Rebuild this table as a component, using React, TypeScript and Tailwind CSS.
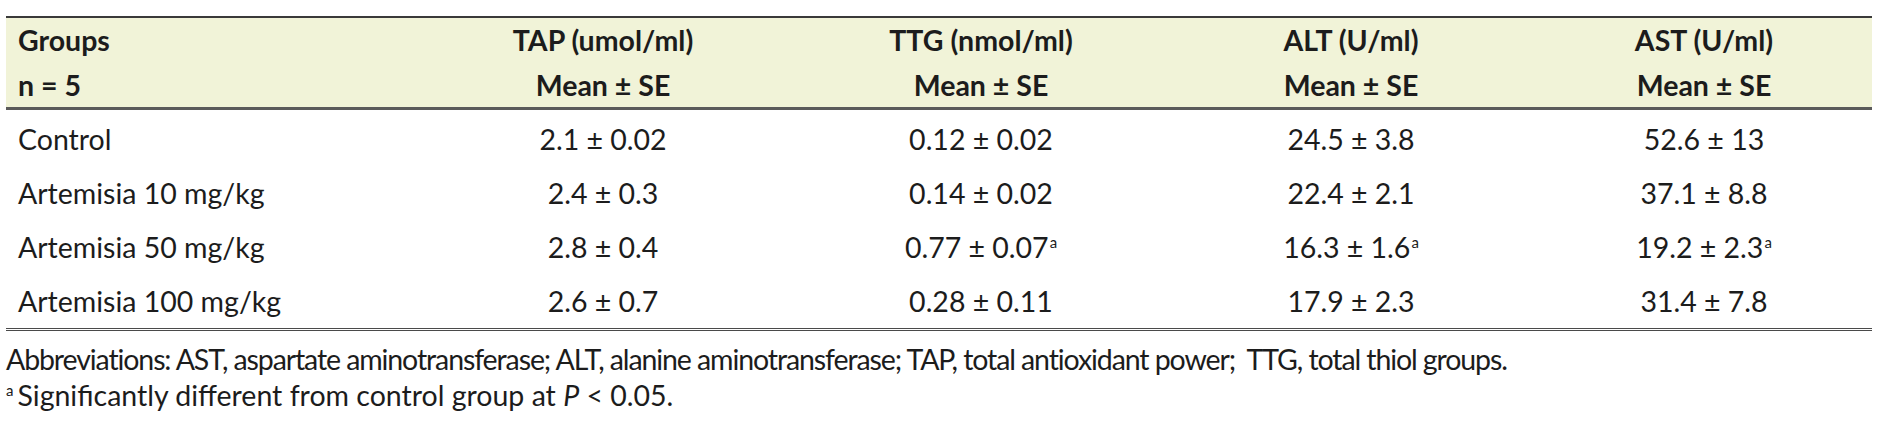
const rows = [
  { group: 'Control', tap: '2.1 ± 0.02', ttg: '0.12 ± 0.02', alt: '24.5 ± 3.8', ast: '52.6 ± 13' },
  { group: 'Artemisia 10 mg/kg', tap: '2.4 ± 0.3', ttg: '0.14 ± 0.02', alt: '22.4 ± 2.1', ast: '37.1 ± 8.8' },
  { group: 'Artemisia 50 mg/kg', tap: '2.8 ± 0.4', ttg: '0.77 ± 0.07', alt: '16.3 ± 1.6', ast: '19.2 ± 2.3', sig: true },
  { group: 'Artemisia 100 mg/kg', tap: '2.6 ± 0.7', ttg: '0.28 ± 0.11', alt: '17.9 ± 2.3', ast: '31.4 ± 7.8' },
];

const cols = 'grid grid-cols-[404px_386px_370px_370px_336px]';

function Sup() {
  return <sup className="text-[15px] relative -top-[10px] ml-[1px]">a</sup>;
}

export default function App() {
  return (
    <div className="w-[1890px] h-[426px] bg-white text-[#1c1c1c] font-['Lato','Liberation_Sans',sans-serif] text-[28.5px]">
      <div className="pt-[16px] pl-[6px] w-[1872px]">
        {/* header */}
        <div className="bg-[#f1f3d8] border-t-2 border-[#3a3a3a] border-b-[3px] border-b-[#5a5a5a] font-bold">
          <div className={`${cols} h-[45px] items-center`}>
            <div className="pl-[12px]">Groups</div>
            <div className="text-center">TAP (umol/ml)</div>
            <div className="text-center">TTG (nmol/ml)</div>
            <div className="text-center">ALT (U/ml)</div>
            <div className="text-center">AST (U/ml)</div>
          </div>
          <div className={`${cols} h-[44px] items-center`}>
            <div className="pl-[12px]">n = 5</div>
            <div className="text-center">Mean ± SE</div>
            <div className="text-center">Mean ± SE</div>
            <div className="text-center">Mean ± SE</div>
            <div className="text-center">Mean ± SE</div>
          </div>
        </div>

        {/* body */}
        <div className="border-b-[3px] border-double border-[#4a4a4a] pt-[2px]">
          {rows.map((r) => (
            <div key={r.group} className={`${cols} h-[54px] items-center`}>
              <div className="pl-[12px]">{r.group}</div>
              <div className="text-center">{r.tap}</div>
              <div className="text-center">
                {r.ttg}
                {r.sig && <Sup />}
              </div>
              <div className="text-center">
                {r.alt}
                {r.sig && <Sup />}
              </div>
              <div className="text-center">
                {r.ast}
                {r.sig && <Sup />}
              </div>
            </div>
          ))}
        </div>
      </div>

      {/* notes */}
      <div className="pl-[6px] pt-[10px] leading-[36px]">
        <p className="whitespace-nowrap tracking-[-1.1px]">
          Abbreviations: AST, aspartate aminotransferase; ALT, alanine aminotransferase; TAP, total antioxidant power;&nbsp; TTG, total thiol groups.
        </p>
        <p className="whitespace-nowrap">
          <sup className="text-[15px] relative -top-[10px] mr-[4px]">a</sup>
          Significantly different from control group at <i>P</i> &lt; 0.05.
        </p>
      </div>
    </div>
  );
}
